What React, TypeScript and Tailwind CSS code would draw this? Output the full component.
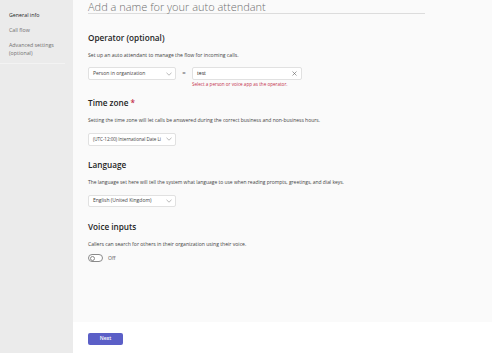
import React from "react";

const Chevron = () => (
  <svg width="6" height="4" viewBox="0 0 6 4" className="shrink-0">
    <path d="M0.5 0.8 L3 3.2 L5.5 0.8" fill="none" stroke="#8a8a8a" strokeWidth="0.6" />
  </svg>
);

const Select = ({ label, small = false }: { label: string; small?: boolean }) => (
  <div className="w-[88px] h-[12.5px] bg-white border border-[#e1e1e1] rounded-[2px] flex items-center pl-[4px] pr-[3px] gap-[1px]">
    <span
      className={`flex-1 min-w-0 ${small ? "text-[4.6px] tracking-[-0.05px]" : "text-[5px]"} leading-[7px] text-[#424242] whitespace-nowrap`}
    >
      {label}
    </span>
    <Chevron />
  </div>
);

export default function App() {
  const font = { fontFamily: '"Open Sans", "Noto Sans", sans-serif' };
  return (
    <div className="w-[492px] h-[353px] flex overflow-hidden" style={font}>
      <div className="w-[73px] h-full bg-[#ebebeb] shrink-0">
        <div className="pt-[12px] w-[65px]">
          <div className="pl-[9px] text-[5.3px] leading-[7px] text-[#242424]">General info</div>
          <div className="pl-[9px] mt-[8px] text-[5.3px] leading-[7px] text-[#707070]">Call flow</div>
          <div className="pl-[9px] mt-[7px] text-[5.3px] leading-[8px] text-[#707070]">
            Advanced settings
            <br />
            (optional)
          </div>
          <div className="mt-[6px] h-px bg-[#f3f3f3]" />
        </div>
      </div>
      <div className="flex-1 flex flex-col">
        <div className="flex-1 bg-[#fafafa] pl-[15px]">
          <div className="w-[337px] h-[14px] border-b border-[#dcdcdc] text-[11px] leading-[13px] text-[#707070] font-light">
            Add a name for your auto attendant
          </div>

          <div className="mt-[18px] text-[8.2px] leading-[12px] font-semibold text-[#242424]">Operator (optional)</div>
          <div className="mt-[8px] text-[5.1px] leading-[7px] text-[#424242]">
            Set up an auto attendant to manage the flow for incoming calls.
          </div>
          <div className="mt-[8px] flex items-center h-[13px]">
            <Select label="Person in organization" />
            <div className="w-[16px] text-center text-[6px] text-[#616161]">=</div>
            <div className="w-[110px] h-[13px] bg-white border border-[#e1e1e1] rounded-[2px] flex items-center justify-between pl-[4px] pr-[4px]">
              <span className="text-[5.1px] leading-[7px] text-[#242424]">test</span>
              <svg width="5" height="5" viewBox="0 0 5 5">
                <path d="M0.5 0.5 L4.5 4.5 M4.5 0.5 L0.5 4.5" stroke="#616161" strokeWidth="0.6" />
              </svg>
            </div>
          </div>
          <div className="mt-[1px] ml-[104px] text-[4.6px] leading-[6px] text-[#c4314b]">
            Select a person or voice app as the operator.
          </div>

          <div className="mt-[10px] text-[8.2px] leading-[12px] font-semibold text-[#242424]">
            Time zone <span className="text-[#c4314b]">*</span>
          </div>
          <div className="mt-[8px] text-[5px] leading-[7px] text-[#424242]">
            Setting the time zone will let calls be answered during the correct business and non-business hours.
          </div>
          <div className="mt-[9px]">
            <Select label="(UTC-12:00) International Date Li" small />
          </div>

          <div className="mt-[13px] text-[8.2px] leading-[12px] font-semibold text-[#242424]">Language</div>
          <div className="mt-[8px] text-[4.95px] leading-[7px] text-[#424242]">
            The language set here will tell the system what language to use when reading prompts, greetings, and dial keys.
          </div>
          <div className="mt-[9px]">
            <Select label="English (United Kingdom)" />
          </div>

          <div className="mt-[14px] text-[8.2px] leading-[12px] font-semibold text-[#242424]">Voice inputs</div>
          <div className="mt-[8px] text-[5.1px] leading-[7px] text-[#424242]">
            Callers can search for others in their organization using their voice.
          </div>
          <div className="mt-[6px] flex items-center gap-[5px]">
            <div className="w-[15px] h-[8px] rounded-full border border-[#8a8a8a] bg-white flex items-center pl-[1px]">
              <div className="w-[5px] h-[5px] rounded-full border border-[#8a8a8a] bg-white" />
            </div>
            <span className="text-[5.1px] leading-[7px] text-[#555555]">Off</span>
          </div>
        </div>
        <div className="h-[31px] bg-white pl-[15px] pt-[11px]">
          <div className="w-[35px] h-[12px] bg-[#5b5fc7] rounded-[2px] flex items-center justify-center text-white text-[5px] font-semibold">
            Next
          </div>
        </div>
      </div>
    </div>
  );
}
